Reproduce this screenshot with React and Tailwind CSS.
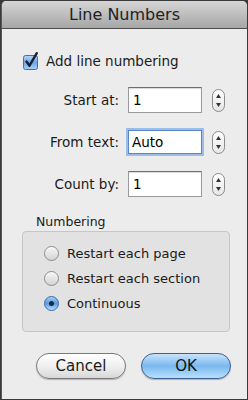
import React from 'react';

const font = { fontFamily: '"DejaVu Sans", "Liberation Sans", sans-serif' };

// --- little aqua controls ---
function Stepper() {
    return (
        <div className="ml-[10px] w-[13px] h-[23px] rounded-[7px] border border-[#8a8a8a] bg-gradient-to-b from-white to-[#e6e6e6] flex flex-col items-center justify-between py-[4px]">
            <svg width="5" height="4" viewBox="0 0 5 4"><path d="M2.5 0L5 4H0z" fill="#333" /></svg>
            <svg width="5" height="4" viewBox="0 0 5 4"><path d="M0 0h5L2.5 4z" fill="#333" /></svg>
        </div>
    );
}

function Field({ label, value, focused }) {
    return (
        <div className="flex items-center h-[26px]">
            <div className="w-[117px] text-right text-[13.5px] text-[#1a1a1a]">{label}</div>
            <div className={focused
                ? "ml-[9px] w-[74px] h-[24px] bg-white border border-[#5a86c8] shadow-[0_0_0_2px_#9cbde8] flex items-center px-[3px] text-[13.5px] text-black"
                : "ml-[9px] w-[74px] h-[26px] bg-white border border-[#9a9a9a] border-t-[#6e6e6e] shadow-[inset_0_1px_1px_rgba(0,0,0,0.15)] flex items-center px-[4px] text-[13.5px] text-black"}>
                {value}
            </div>
            <Stepper />
        </div>
    );
}

function Radio({ label, checked }) {
    return (
        <div className="flex items-center h-[25px]">
            {checked ? (
                <div className="w-[15px] h-[15px] rounded-full border border-[#3b6aa8] bg-gradient-to-b from-[#a9cdf3] via-[#5a9ae0] to-[#b8dcfb] flex items-center justify-center">
                    <div className="w-[5px] h-[5px] rounded-full bg-[#1b2a3e]" />
                </div>
            ) : (
                <div className="w-[15px] h-[15px] rounded-full border border-[#8c8c8c] bg-gradient-to-b from-[#f6f6f6] to-[#d4d4d4] shadow-[inset_0_1px_1px_rgba(255,255,255,0.8)]" />
            )}
            <span className="ml-[8px] text-[13px] text-[#1a1a1a]">{label}</span>
        </div>
    );
}

export default function App() {
    return (
        <div className="w-[248px] h-[400px] bg-[#3a3a3a] p-[1px]" style={font}>
            <div className="w-full h-full rounded-t-[5px] overflow-hidden bg-[#ececec] border-l border-[#5a5a5a] flex flex-col">
                <header className="h-[28px] shrink-0 bg-gradient-to-b from-[#d6d6d6] to-[#a6a6a6] border-b border-[#4e4e4e] flex items-center justify-center">
                    <span className="text-[16px] text-[#222]">Line Numbers</span>
                </header>

                <div className="flex items-center mt-[22px] ml-[21px] h-[20px]">
                    <svg width="16" height="18" viewBox="0 0 16 18">
                        <defs>
                            <linearGradient id="cb" x1="0" y1="0" x2="0" y2="1">
                                <stop offset="0" stopColor="#b6d6f7" />
                                <stop offset="0.5" stopColor="#6ea6e6" />
                                <stop offset="1" stopColor="#a9d2fa" />
                            </linearGradient>
                        </defs>
                        <rect x="0.5" y="3.5" width="14" height="14" rx="2" fill="url(#cb)" stroke="#4a6f9f" />
                        <path d="M3.5 9.5l3 4.2L13.8 1.2" fill="none" stroke="#1a2233" strokeWidth="2.4" strokeLinecap="round" strokeLinejoin="round" />
                    </svg>
                    <span className="ml-[7px] text-[13.5px] text-[#1a1a1a]">Add line numbering</span>
                </div>

                <div className="mt-[16px] flex flex-col gap-[16px]">
                    <Field label="Start at:" value="1" />
                    <Field label="From text:" value="Auto" focused />
                    <Field label="Count by:" value="1" />
                </div>

                <div className="mt-[17px] ml-[34px] h-[16px] leading-[16px] text-[12.5px] text-[#1a1a1a]">Numbering</div>
                <div className="mt-[1px] ml-[20px] w-[208px] h-[101px] rounded-[4px] border border-[#c6c6c6] bg-[#e2e2e2] pt-[9px] pl-[21px]">
                    <Radio label="Restart each page" />
                    <Radio label="Restart each section" />
                    <Radio label="Continuous" checked />
                </div>

                <div className="mt-[21px] flex gap-[15px] ml-[34px]">
                    <button className="w-[90px] h-[26px] rounded-full border border-[#7a7a7a] bg-gradient-to-b from-white via-[#f0f0f0] to-[#d8d8d8] shadow-[0_1px_1px_rgba(0,0,0,0.25)] text-[15px] text-[#1a1a1a]">Cancel</button>
                    <button className="w-[90px] h-[26px] rounded-full border border-[#3f5f93] bg-gradient-to-b from-[#c9e3fb] via-[#7ab8ee] to-[#b7e0fd] shadow-[0_1px_1px_rgba(0,0,0,0.25)] text-[15px] text-[#111]">OK</button>
                </div>
            </div>
        </div>
    );
}
